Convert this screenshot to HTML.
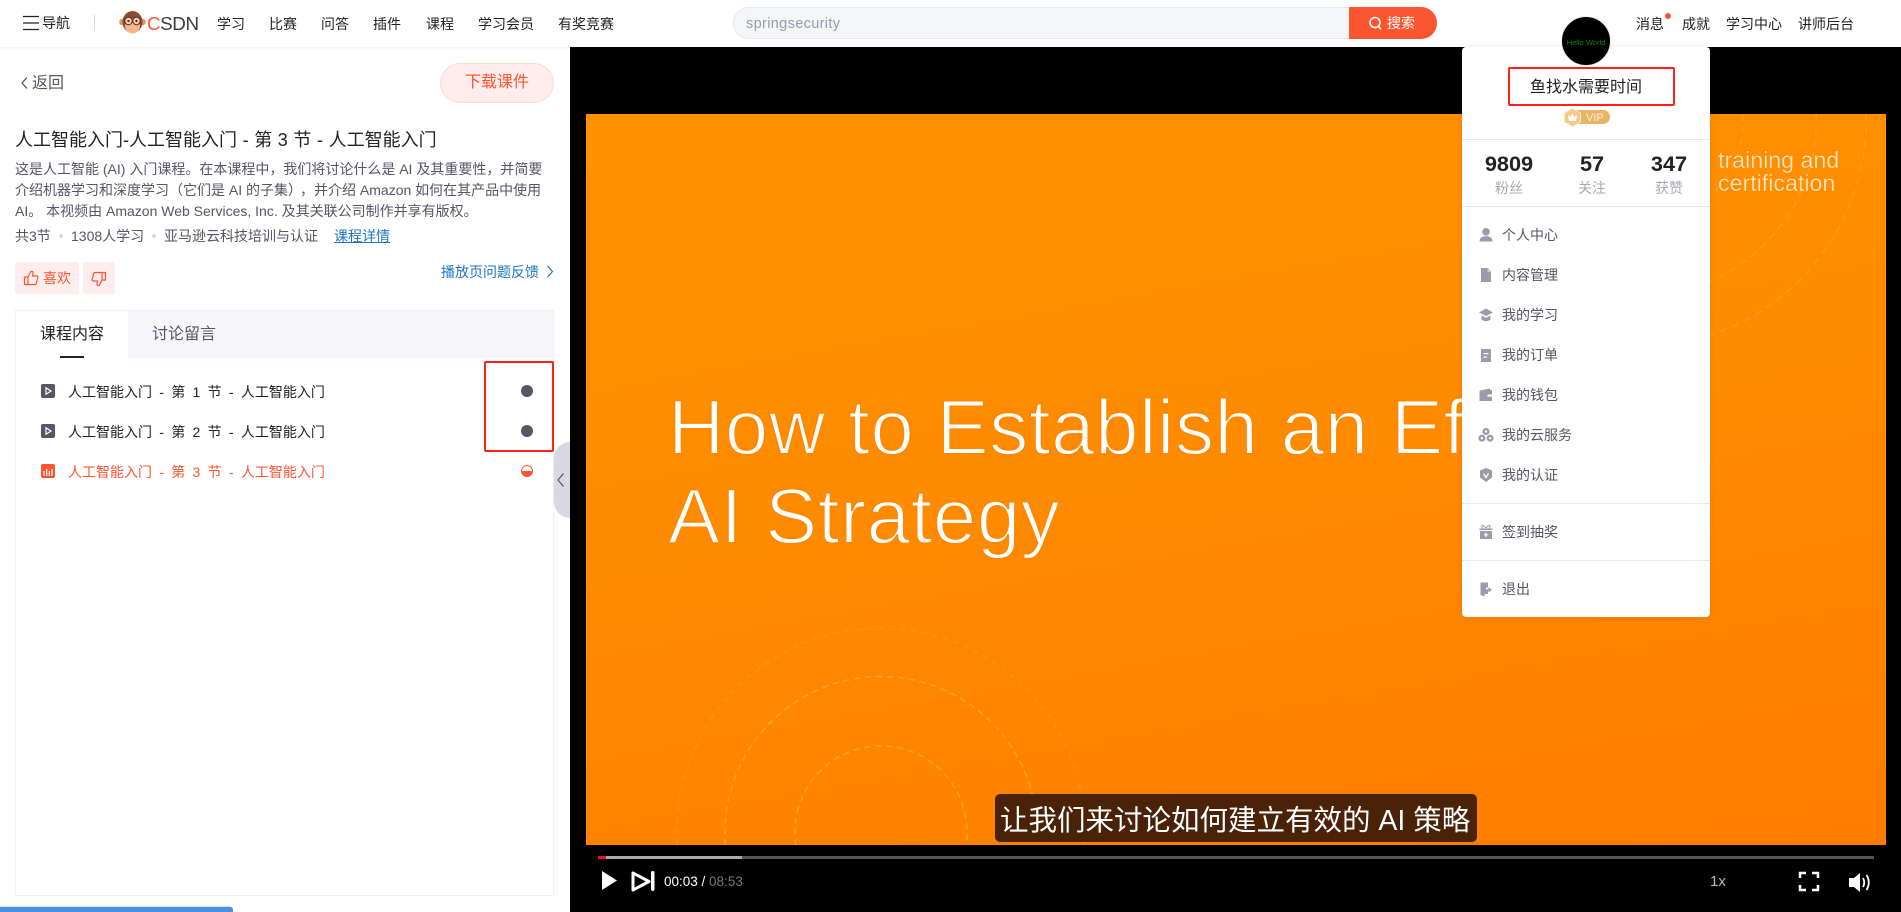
<!DOCTYPE html>
<html lang="zh"><head><meta charset="utf-8"><title>课程播放</title>
<style>
*{box-sizing:border-box;margin:0;padding:0}
html,body{width:1901px;height:912px;overflow:hidden;background:#fff;font-family:"Liberation Sans","Noto Sans CJK SC",sans-serif;color:#222226}
.t{position:absolute;white-space:nowrap;line-height:20px;font-size:14px}
.a{position:absolute}
.g{color:#555666}
.m{color:#555666;left:1502px}
.i{position:absolute;left:1478px;width:16px;height:16px;fill:#9b9bab}
.sl{color:#fff;left:668px;font-size:78px;line-height:90px;-webkit-text-stroke:1.9px #ff8800;letter-spacing:.6px}
.ci{word-spacing:3.4px;left:68px}
</style></head><body>

<!-- video area -->
<div class="a" style="left:570px;top:47px;width:1331px;height:865px;background:#000"></div>
<div class="a" style="left:586px;top:114px;width:1300px;height:731px;background:linear-gradient(170deg,#ff9000 0%,#ff8c00 45%,#ff7c00 100%);overflow:hidden"></div>
<svg class="a" style="left:586px;top:114px" width="1300" height="731" viewBox="586 114 1300 731" fill="none" stroke-linecap="round">
<g stroke="#ffb347" stroke-width="1.600" stroke-dasharray="5 6" opacity=".6">
<path d="M796 845A86 86 0 1 1 966 845"/><path d="M725.500 845A156 156 0 1 1 1036.500 845"/></g>
<path d="M677.400 845A204 204 0 1 1 1084.600 845" stroke="#ffa733" stroke-width="1.400" stroke-dasharray="5 6" opacity=".35"/>
<g stroke="#ffb347" stroke-width="1.400" stroke-dasharray="6 7" opacity=".4">
<path d="M1743 114A103 103 0 0 1 1710 196"/><path d="M1816 114A176 176 0 0 1 1710 281.500"/><path d="M1866 114A226 226 0 0 1 1710 335"/></g>
</svg>
<div class="t sl" style="top:382px">How to Establish an Ef</div>
<div class="t sl" style="top:471px">AI Strategy</div>
<div class="t" style="left:1718px;top:149px;font-size:23.2px;line-height:23px;color:#ffe9cc;-webkit-text-stroke:.35px #ff8c00">training and<br>certification</div>

<!-- subtitle -->
<div class="a" style="left:995px;top:794px;width:482px;height:48px;background:#4a2208;border-radius:5px"></div>
<div class="t" style="left:1000px;top:801px;font-size:28.500px;line-height:40px;color:#fff">让我们来讨论如何建立有效的 AI 策略</div>

<!-- progress -->
<div class="a" style="left:598px;top:856px;width:1276px;height:3px;background:#555"></div>
<div class="a" style="left:598px;top:856px;width:144px;height:3px;background:#aaa"></div>
<div class="a" style="left:598px;top:856px;width:8px;height:3px;background:#e8112d"></div>

<!-- player controls -->
<svg class="a" style="left:600px;top:868px" width="60" height="26" viewBox="600 868 60 26">
<path d="M602 871L617 880.500L602 890Z" fill="#fff"/>
<path d="M633 873L649 881.500L633 890Z" fill="none" stroke="#fff" stroke-width="3" stroke-linejoin="round"/>
<rect x="651" y="871" width="3.500" height="20" rx="1.700" fill="#fff"/>
</svg>
<div class="t" style="left:664px;top:872px;font-size:13.500px;color:#fff">00:03 / <span style="color:#777">08:53</span></div>
<div class="t" style="left:1710px;top:872px;font-size:15px;color:#bbb">1x</div>
<svg class="a" style="left:1797px;top:870px" width="76" height="24" viewBox="1797 870 76 24" fill="none">
<path d="M1800 878V873H1806M1812 873H1818V878M1818 885V890H1812M1806 890H1800V885" stroke="#fff" stroke-width="2.500"/>
<path d="M1849 878H1854L1860 873V892L1854 887H1849Z" fill="#fff"/>
<path d="M1863 878Q1865.500 882.500 1863 887" stroke="#fff" stroke-width="1.800"/>
<path d="M1866.500 875Q1871 882.500 1866.500 890" stroke="#fff" stroke-width="1.800"/>
</svg>

<!-- header -->
<div class="a" style="left:0;top:0;width:1901px;height:47px;background:#fff;box-shadow:0 1px 3px rgba(0,0,0,.06)"></div>
<svg class="a" style="left:23px;top:15px" width="16" height="16" fill="none" stroke="#222226" stroke-width="1.300"><path d="M0 1.500H16M0 8H16M0 14.500H16"/></svg>
<div class="t" style="left:42px;top:13px">导航</div>
<div class="a" style="left:94px;top:15px;width:1px;height:16px;background:#d8d8dc"></div>
<svg class="a" style="left:119px;top:11px" width="27" height="23" viewBox="0 0 27 23">
<circle cx="3.500" cy="11" r="3.300" fill="#e8935f"/><circle cx="23.500" cy="11" r="3.300" fill="#e8935f"/>
<ellipse cx="13.500" cy="11" rx="10" ry="11" fill="#8c4b32"/>
<ellipse cx="13.500" cy="15" rx="7.500" ry="7.500" fill="#f4b48c"/>
<ellipse cx="9.500" cy="10" rx="3.700" ry="3.700" fill="#f6d3b8" stroke="#5a3020" stroke-width="1"/>
<ellipse cx="17.500" cy="10" rx="3.700" ry="3.700" fill="#f6d3b8" stroke="#5a3020" stroke-width="1"/>
<circle cx="9.500" cy="10" r="1.200" fill="#5a3020"/><circle cx="17.500" cy="10" r="1.200" fill="#5a3020"/>
</svg>
<div class="t" style="left:147px;top:12px;font-size:18.800px;line-height:24px;letter-spacing:-.4px;color:#3d3d3d"><span style="color:#fc5531">C</span>SDN</div>
<div class="t" style="left:217px;top:14px">学习</div>
<div class="t" style="left:269px;top:14px">比赛</div>
<div class="t" style="left:321px;top:14px">问答</div>
<div class="t" style="left:373px;top:14px">插件</div>
<div class="t" style="left:426px;top:14px">课程</div>
<div class="t" style="left:478px;top:14px">学习会员</div>
<div class="t" style="left:558px;top:14px">有奖竞赛</div>

<!-- search -->
<div class="a" style="left:733px;top:7px;width:704px;height:32px;background:#f5f6f7;border:1px solid #e8e8ed;border-radius:16px"></div>
<div class="a" style="left:1349px;top:7px;width:88px;height:32px;background:#fc5531;border-radius:0 16px 16px 0"></div>
<div class="t" style="left:746px;top:14px;font-size:14.500px;letter-spacing:.35px;color:#999aaa">springsecurity</div>
<svg class="a" style="left:1368px;top:16px" width="15" height="15" fill="none" stroke="#fff" stroke-width="1.500"><circle cx="7" cy="6.500" r="5"/><path d="M10.500 10.500L13 13.500"/></svg>
<div class="t" style="left:1387px;top:13px;color:#fff">搜索</div>

<div class="t" style="left:1636px;top:14px">消息</div>
<div class="a" style="left:1665px;top:13px;width:6px;height:6px;border-radius:50%;background:#fc5531"></div>
<div class="t" style="left:1682px;top:14px">成就</div>
<div class="t" style="left:1726px;top:14px">学习中心</div>
<div class="t" style="left:1798px;top:14px">讲师后台</div>

<!-- dropdown -->
<div class="a" style="left:1462px;top:47px;width:248px;height:570px;background:#fff;border-radius:4px;box-shadow:0 0 8px rgba(0,0,0,.08)"></div>
<div class="a" style="left:1561px;top:16px;width:50px;height:50px;border-radius:50%;background:#000;border:1px solid #eee"></div>
<div class="t" style="left:1561px;top:33px;width:50px;text-align:center;font-size:7.500px;color:#0a8a0a">Hello World</div>
<div class="a" style="left:1508px;top:67px;width:167px;height:39px;border:2px solid #ff2016;border-radius:2px"></div>
<div class="t" style="left:1530px;top:78px;font-size:16px">鱼找水需要时间</div>
<div class="a" style="left:1570px;top:110px;width:40px;height:14px;background:#e8b465;border-radius:0 7px 7px 0"></div>
<svg class="a" style="left:1563px;top:108px" width="19" height="19" viewBox="0 0 19 19"><path d="M9.500 0.500L17.500 5V14L9.500 18.500L1.500 14V5Z" fill="#f5c988" stroke="#faead0"/><path d="M5 7L7.500 9L9.500 5.500L11.500 9L14 7L13 13H6Z" fill="#fff"/></svg>
<div class="t" style="left:1586px;top:108px;font-size:11px;color:#fbeedb">VIP</div>

<div class="a" style="left:1462px;top:139px;width:248px;height:1px;background:#e8e8ed"></div>
<div class="t" style="left:1469px;top:154px;width:80px;text-align:center;font-size:21.700px;font-weight:bold">9809</div>
<div class="t" style="left:1552px;top:154px;width:80px;text-align:center;font-size:21.700px;font-weight:bold">57</div>
<div class="t" style="left:1629px;top:154px;width:80px;text-align:center;font-size:21.700px;font-weight:bold">347</div>
<div class="t" style="left:1495px;top:178px;color:#a9a9b5">粉丝</div>
<div class="t" style="left:1578px;top:178px;color:#a9a9b5">关注</div>
<div class="t" style="left:1655px;top:178px;color:#a9a9b5">获赞</div>
<div class="a" style="left:1462px;top:206px;width:248px;height:1px;background:#e8e8ed"></div>

<svg class="i" style="top:227px" viewBox="0 0 16 16"><circle cx="8" cy="4.800" r="3.800"/><path d="M1.500 14.500C1.500 10.500 4.500 9.300 8 9.300S14.500 10.500 14.500 14.500Z"/></svg>
<div class="t m" style="top:225px">个人中心</div>
<svg class="i" style="top:267px" viewBox="0 0 16 16"><path d="M3 1H10L13 4.500V15H3Z"/><path d="M9.500 1V5H13" fill="#fff" opacity=".55"/></svg>
<div class="t m" style="top:265px">内容管理</div>
<svg class="i" style="top:307px" viewBox="0 0 16 16"><path d="M8 1.500L15 5.500L8 9L1 5.500Z"/><path d="M3.500 8.500L8 10.800L12.500 8.500V12.500Q8 16 3.500 12.500Z"/></svg>
<div class="t m" style="top:305px">我的学习</div>
<svg class="i" style="top:347px" viewBox="0 0 16 16"><path fill-rule="evenodd" d="M3 2H13V15H3ZM5.500 6V7.300H10.500V6ZM5.500 9.500V10.800H9V9.500Z"/></svg>
<div class="t m" style="top:345px">我的订单</div>
<svg class="i" style="top:387px" viewBox="0 0 16 16"><path fill-rule="evenodd" d="M1.500 5Q1.500 3.500 3 3.300L12 1.500V3H14V14H1.500ZM9.500 7.500V9.800H14V7.500Z"/></svg>
<div class="t m" style="top:385px">我的钱包</div>
<svg class="i" style="top:427px" viewBox="0 0 16 16"><circle cx="8" cy="4.500" r="3.500"/><circle cx="3.900" cy="11.200" r="3.500"/><circle cx="12.100" cy="11.200" r="3.500"/><circle cx="8" cy="4.500" r="1.200" fill="#fff"/><circle cx="3.900" cy="11.200" r="1.200" fill="#fff"/><circle cx="12.100" cy="11.200" r="1.200" fill="#fff"/></svg>
<div class="t m" style="top:425px">我的云服务</div>
<svg class="i" style="top:467px" viewBox="0 0 16 16"><path d="M8 1L14 3.500V10.500L8 15L2 10.500V3.500Z"/><path d="M5.500 6.500L8 10.500L10.500 6.500" fill="none" stroke="#fff" stroke-width="1.300"/></svg>
<div class="t m" style="top:465px">我的认证</div>
<div class="a" style="left:1462px;top:503px;width:248px;height:1px;background:#e8e8ed"></div>
<svg class="i" style="top:524px" viewBox="0 0 16 16"><path d="M2 7H14V15H2Z"/><path d="M1.500 4.500H14.500V6H1.500Z"/><path d="M5 4.500Q2.500 1 5 1.300L8 4L11 1.300Q13.500 1 11 4.500" fill="none" stroke="#9b9bab"/><path d="M8 8.500V13M5.800 10.800H10.200" stroke="#fff" stroke-width="1.200"/></svg>
<div class="t m" style="top:522px">签到抽奖</div>
<div class="a" style="left:1462px;top:560px;width:248px;height:1px;background:#e8e8ed"></div>
<svg class="i" style="top:581px" viewBox="0 0 16 16"><path d="M2.500 1.500H10V6.500H8V9.500H10V13H6.500V15.500L2.500 14Z"/><path d="M10.500 6V8H8.500V9.500H10.500V11.500L14 8.700Z"/></svg>
<div class="t m" style="top:579px">退出</div>

<!-- left panel -->
<svg class="a" style="left:20px;top:76px" width="9" height="14" fill="none" stroke="#555666" stroke-width="1.300"><path d="M7 1.500L2 7L7 12.500"/></svg>
<div class="t g" style="left:32px;top:74px;font-size:16px">返回</div>
<div class="a" style="left:440px;top:63px;width:114px;height:40px;border-radius:20px;background:#fdeeed;border:1px solid #fbdcd6"></div>
<div class="t" style="left:465px;top:73px;font-size:16px;color:#fc5531">下载课件</div>

<div class="t" style="left:15px;top:129px;font-size:18px;line-height:22px;word-spacing:.6px">人工智能入门-人工智能入门 - 第 3 节 - 人工智能入门</div>
<div class="t g" style="left:15px;top:159px;line-height:21px">这是人工智能 (AI) 入门课程。在本课程中，我们将讨论什么是 AI 及其重要性，并简要<br>介绍机器学习和深度学习（它们是 AI 的子集<span style="margin-right:5px">）</span>，并介绍 Amazon 如何在其产品中使用<br>AI。 本视频由 Amazon Web Services, Inc. 及其关联公司制作并享有版权。</div>
<div class="t g" style="left:15px;top:226px">共3节</div>
<div class="a" style="left:59px;top:234px;width:4px;height:4px;border-radius:50%;background:#d8d8e0"></div>
<div class="t g" style="left:71px;top:226px">1308人学习</div>
<div class="a" style="left:152px;top:234px;width:4px;height:4px;border-radius:50%;background:#d8d8e0"></div>
<div class="t g" style="left:164px;top:226px">亚马逊云科技培训与认证</div>
<div class="t" style="left:334px;top:226px;color:#1c77c3;text-decoration:underline">课程详情</div>

<div class="a" style="left:15px;top:262px;width:64px;height:32px;background:#fdeeed;border-radius:2px"></div>
<div class="a" style="left:83px;top:262px;width:32px;height:32px;background:#fdeeed;border-radius:2px"></div>
<svg class="a" style="left:23px;top:270px" width="16" height="16" viewBox="0 0 16 16" fill="none" stroke="#fc5531" stroke-width="1.200" stroke-linejoin="round"><path d="M5 7L7.500 2Q8 1 9 1.300Q10.300 1.800 10 3.500L9.500 6H14Q15.200 6.200 14.800 7.500L13.300 13.500Q13 14.500 12 14.500H5ZM5 7H1.500V14.500H5"/></svg>
<div class="t" style="left:43px;top:268px;color:#fc5531">喜欢</div>
<svg class="a" style="left:91px;top:271px" width="16" height="16" viewBox="0 0 16 16" fill="none" stroke="#fc5531" stroke-width="1.200" stroke-linejoin="round"><path d="M11 9L8.500 14Q8 15 7 14.700Q5.700 14.200 6 12.500L6.500 10H2Q.8 9.800 1.200 8.500L2.700 2.500Q3 1.500 4 1.500H11ZM11 9H14.500V1.500H11"/></svg>
<div class="t" style="left:441px;top:262px;color:#1c77c3">播放页问题反馈</div>
<svg class="a" style="left:546px;top:265px" width="8" height="13" fill="none" stroke="#1c77c3" stroke-width="1.200"><path d="M1.500 1L6.500 6.500L1.500 12"/></svg>

<!-- course card -->
<div class="a" style="left:15px;top:310px;width:539px;height:586px;border:1px solid #eef0f5;background:#fff"></div>
<div class="a" style="left:16px;top:311px;width:537px;height:47px;background:#f7f7fb;border-bottom:1px solid #eef0f5"></div>
<div class="a" style="left:16px;top:311px;width:112px;height:48px;background:#fff"></div>
<div class="t" style="left:40px;top:325px;font-size:16px">课程内容</div>
<div class="a" style="left:60px;top:356px;width:24px;height:2px;background:#222226"></div>
<div class="t g" style="left:152px;top:325px;font-size:16px">讨论留言</div>

<svg class="a" style="left:41px;top:384px" width="14" height="14" viewBox="0 0 14 14"><rect width="14" height="14" rx="2" fill="#555666"/><path d="M5 3.800L10 7L5 10.200Z" fill="none" stroke="#fff" stroke-width="1.200"/></svg>
<div class="t ci" style="top:382px">人工智能入门 - 第 1 节 - 人工智能入门</div>
<svg class="a" style="left:41px;top:424px" width="14" height="14" viewBox="0 0 14 14"><rect width="14" height="14" rx="2" fill="#555666"/><path d="M5 3.800L10 7L5 10.200Z" fill="none" stroke="#fff" stroke-width="1.200"/></svg>
<div class="t ci" style="top:422px">人工智能入门 - 第 2 节 - 人工智能入门</div>
<svg class="a" style="left:41px;top:464px" width="14" height="14" viewBox="0 0 14 14"><rect width="14" height="14" rx="2" fill="#fc5531"/><path d="M3 7V12M5.700 5V12M8.300 7V12M11 5V12" stroke="#fff" stroke-width="1.200"/></svg>
<div class="t ci" style="top:462px;color:#fc5531">人工智能入门 - 第 3 节 - 人工智能入门</div>

<div class="a" style="left:521px;top:385px;width:12px;height:12px;border-radius:50%;background:#555666"></div>
<div class="a" style="left:521px;top:425px;width:12px;height:12px;border-radius:50%;background:#555666"></div>
<div class="a" style="left:521px;top:465px;width:12px;height:12px;border-radius:50%;border:1.500px solid #fc5531;background:linear-gradient(#fff 50%,#fc5531 50%)"></div>
<div class="a" style="left:484px;top:361px;width:70px;height:91px;border:2px solid #ff2016;border-radius:2px"></div>

<div class="a" style="left:554px;top:442px;width:16px;height:76px;background:#d8d8e3;border-radius:16px 0 0 16px"></div>
<svg class="a" style="left:556px;top:472px" width="10" height="16" fill="none" stroke="#555666" stroke-width="1.200"><path d="M7.500 1.500L2 8L7.500 14.500"/></svg>

<div class="a" style="left:0;top:907px;width:233px;height:5px;background:#4a90e2;border-radius:0 3px 0 0;box-shadow:0 -1px 1px #ddd"></div>
</body></html>
